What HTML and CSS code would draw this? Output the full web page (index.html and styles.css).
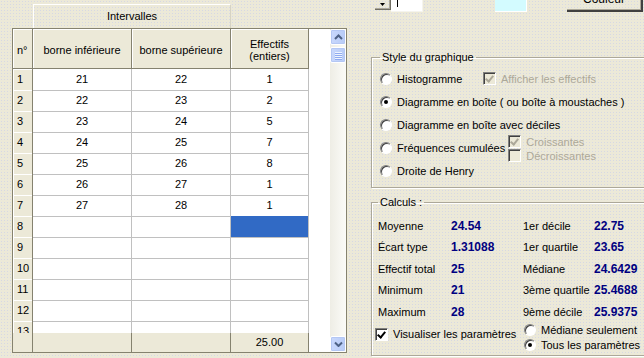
FILE: index.html
```html
<!DOCTYPE html>
<html lang="fr">
<head>
    <meta charset="UTF-8">
    <title>Statistiques - Intervalles</title>
    <link rel="stylesheet" href="styles.css">
</head>
<body>
<div class="app">

    <!-- grille de saisie -->
    <section class="data">
        <div class="band">Intervalles</div>
        <div class="grid">
            <div class="sheet">
                <div class="rows">
                    <div class="row head">
                        <span class="num">n°</span>
                        <span>borne inférieure</span>
                        <span>borne supérieure</span>
                        <span>Effectifs<br>(entiers)</span>
                    </div>
                    <div class="row"><span class="num">1</span><span>21</span><span>22</span><span>1</span></div>
                    <div class="row"><span class="num">2</span><span>22</span><span>23</span><span>2</span></div>
                    <div class="row"><span class="num">3</span><span>23</span><span>24</span><span>5</span></div>
                    <div class="row"><span class="num">4</span><span>24</span><span>25</span><span>7</span></div>
                    <div class="row"><span class="num">5</span><span>25</span><span>26</span><span>8</span></div>
                    <div class="row"><span class="num">6</span><span>26</span><span>27</span><span>1</span></div>
                    <div class="row"><span class="num">7</span><span>27</span><span>28</span><span>1</span></div>
                    <div class="row"><span class="num">8</span><span></span><span></span><span class="selected"></span></div>
                    <div class="row"><span class="num">9</span><span></span><span></span><span></span></div>
                    <div class="row"><span class="num">10</span><span></span><span></span><span></span></div>
                    <div class="row"><span class="num">11</span><span></span><span></span><span></span></div>
                    <div class="row"><span class="num">12</span><span></span><span></span><span></span></div>
                    <div class="row"><span class="num">13</span><span></span><span></span><span></span></div>
                </div>
                <div class="row foot">
                    <span></span><span></span><span></span><span>25.00</span>
                </div>
            </div>
            <div class="vscroll">
                <div class="sbtn">
                    <svg width="9" height="6" viewBox="0 0 9 6"><path d="M1 5 L4.5 1.5 L8 5" stroke="#4d6185" stroke-width="2" fill="none"/></svg>
                </div>
                <div class="thumb"><i></i><i></i><i></i><i></i></div>
                <div class="track"></div>
                <div class="sbtn">
                    <svg width="9" height="6" viewBox="0 0 9 6"><path d="M1 1.5 L4.5 5 L8 1.5" stroke="#4d6185" stroke-width="2" fill="none"/></svg>
                </div>
            </div>
        </div>
    </section>

    <!-- options -->
    <section class="side">
        <div class="toolbar">
            <div class="spin">
                <svg width="5" height="3" viewBox="0 0 5 3"><path d="M0 0 H5 L2.5 3 Z" fill="#000"/></svg>
            </div>
            <div class="field"><i class="caret"></i></div>
            <div class="swatch"></div>
            <div class="btn"><span>Couleur</span></div>
        </div>

        <fieldset class="group style">
            <legend>Style du graphique</legend>
            <div class="opt">
                <label class="radio w-hist"><i class="dot"></i>Histogramme</label>
                <label class="check off"><i class="box on"></i>Afficher les effectifs</label>
            </div>
            <div class="opt">
                <label class="radio"><i class="dot on"></i>Diagramme en boîte ( ou boîte à moustaches )</label>
            </div>
            <div class="opt">
                <label class="radio"><i class="dot"></i>Diagramme en boîte avec déciles</label>
            </div>
            <div class="opt">
                <label class="radio"><i class="dot"></i>Fréquences cumulées</label>
                <div class="sub">
                    <label class="check off"><i class="box on"></i>Croissantes</label>
                    <label class="check off"><i class="box"></i>Décroissantes</label>
                </div>
            </div>
            <div class="opt">
                <label class="radio"><i class="dot"></i>Droite de Henry</label>
            </div>
        </fieldset>

        <fieldset class="group calc">
            <legend>Calculs :</legend>
            <div class="stats">
                <span>Moyenne</span><b>24.54</b><span>1er décile</span><b>22.75</b>
                <span>Écart type</span><b>1.31088</b><span>1er quartile</span><b>23.65</b>
                <span>Effectif total</span><b>25</b><span>Médiane</span><b>24.6429</b>
                <span>Minimum</span><b>21</b><span>3ème quartile</span><b>25.4688</b>
                <span>Maximum</span><b>28</b><span>9ème décile</span><b>25.9375</b>
            </div>
            <div class="bottom">
                <label class="check show"><i class="box on"></i>Visualiser les paramètres</label>
                <div class="which">
                    <label class="radio"><i class="dot"></i>Médiane seulement</label>
                    <label class="radio"><i class="dot on"></i>Tous les paramètres</label>
                </div>
            </div>
        </fieldset>
    </section>

</div>
</body>
</html>
```

FILE: styles.css
```css
* {
    box-sizing: border-box;
}

body {
    margin: 0;
    width: 644px;
    height: 358px;
    overflow: hidden;
    font-family: "Liberation Sans", Arial, sans-serif;
    font-size: 11px;
    color: #000;
    background-color: #ece9d8;
    background-image: radial-gradient(circle, #d6d8e4 0.6px, transparent 0.9px);
    background-size: 3px 3px;
}

.app {
    display: flex;
    height: 358px;
}

/* ---------- grille ---------- */

.data {
    width: 371px;
    flex: none;
    padding: 4px 0 0 12px;
}

.band {
    margin-left: 21px;
    width: 198px;
    height: 24px;
    line-height: 23px;
    text-align: center;
    border-top: 1px solid #fff;
    border-left: 1px solid #fff;
    border-right: 1px solid #d6d3c4;
}

.grid {
    display: flex;
    width: 335px;
    height: 325px;
    border: 1px solid #85826f;
}

.sheet {
    width: 317px;
    display: flex;
    flex-direction: column;
    background: #fff;
}

.rows {
    height: 304px;
    overflow: hidden;
}

.row {
    display: grid;
    grid-template-columns: 20px 99px 99px 78px;
    height: 21px;
}

.row > span {
    border-right: 1px solid #c0c0c0;
    border-bottom: 1px solid #c0c0c0;
    text-align: center;
    line-height: 21px;
}

.row > .num {
    text-align: left;
    padding-left: 4px;
    background: #ece9d8;
    border-right-color: #85826f;
    border-bottom-color: #85826f;
    box-shadow: inset 1px 1px #fff;
}

.row > .selected {
    background: #316ac5;
}

.row.head {
    height: 40px;
}

.row.head > span {
    background: #ece9d8;
    border-right-color: #85826f;
    border-bottom-color: #85826f;
    box-shadow: inset 1px 1px #fff;
    display: flex;
    align-items: center;
    justify-content: center;
    line-height: 12px;
    padding-top: 2px;
}

.row.head > .num {
    justify-content: flex-start;
}

.row.foot {
    height: 19px;
    flex: none;
    margin-top: auto;
}

.row.foot > span {
    background: #ece9d8;
    border-bottom: none;
    border-right-color: #85826f;
    line-height: 19px;
}

/* barre de défilement */

.vscroll {
    width: 16px;
    display: flex;
    flex-direction: column;
    background: linear-gradient(to right, #eeede5, #fbfbf8);
}

.sbtn,
.thumb {
    height: 16px;
    display: flex;
    align-items: center;
    justify-content: center;
    border: 1px solid #fff;
    border-radius: 2px;
    background: linear-gradient(to right, #c9d8fc, #b7cbf7);
    box-shadow: inset 0 0 0 1px #b4c7f4;
}

.thumb {
    margin-top: 2px;
    height: 16px;
    flex-direction: column;
    gap: 1px;
}

.thumb i {
    width: 7px;
    height: 1px;
    background: #eef4fe;
    box-shadow: 0 1px #8faaf0;
}

.track {
    flex: 1;
}

/* ---------- options ---------- */

.side {
    flex: 1;
    display: flex;
    flex-direction: column;
}

.toolbar {
    display: flex;
    align-items: flex-start;
    height: 12px;
    padding-left: 4px;
}

.spin {
    width: 16px;
    height: 10px;
    display: flex;
    align-items: center;
    justify-content: center;
    border-right: 1px solid #716f64;
    border-bottom: 1px solid #716f64;
    box-shadow: inset -1px -1px #aca899;
}

.field {
    width: 32px;
    height: 12px;
    background: #fff;
    border-right: 1px solid #f5f4ee;
    border-bottom: 1px solid #f5f4ee;
    padding-left: 6px;
}

.caret {
    display: block;
    width: 1px;
    height: 7px;
    background: #000;
}

.swatch {
    margin-left: 72px;
    width: 32px;
    height: 12px;
    background: #d3fbff;
    border-right: 1px solid #fff;
    border-bottom: 1px solid #fff;
}

.btn {
    margin-left: 40px;
    width: 76px;
    height: 12px;
    overflow: hidden;
    text-align: center;
    border-right: 2px solid #404040;
    border-bottom: 2px solid #404040;
    box-shadow: inset -1px -1px #aca899;
}

.btn span {
    display: block;
    margin-top: -7px;
    font-size: 12px;
    line-height: 13px;
}

.group {
    margin: 0;
    border: 1px solid #aca899;
    box-shadow: 1px 1px 0 #fff, inset 1px 1px 0 #fff;
    margin-right: -6px;
}

.group legend {
    padding: 0 2px;
    line-height: 13px;
}

.style {
    margin-top: 39px;
    padding: 3px 0 5px 8px;
}

.opt {
    display: flex;
    align-items: center;
    height: 23px;
}

.radio,
.check {
    display: flex;
    align-items: center;
    white-space: nowrap;
}

.w-hist {
    width: 103px;
}

.dot {
    width: 12px;
    height: 12px;
    margin-right: 5px;
    flex: none;
    border-radius: 50%;
    background: #fff;
    border: 1px solid;
    border-color: #808080 #fff #fff #808080;
    box-shadow: inset 1px 1px #404040;
    display: flex;
    align-items: center;
    justify-content: center;
}

.dot.on::after {
    content: "";
    width: 4px;
    height: 4px;
    border-radius: 50%;
    background: #000;
}

.box {
    width: 13px;
    height: 13px;
    margin-right: 5px;
    flex: none;
    background: #fff;
    border: 1px solid;
    border-color: #808080 #fff #fff #808080;
    box-shadow: inset 1px 1px #404040;
    position: relative;
}

.box.on::after {
    content: "";
    position: absolute;
    left: 3px;
    top: 1px;
    width: 3px;
    height: 6px;
    border: solid #000;
    border-width: 0 2px 2px 0;
    transform: rotate(40deg);
}

.check.off {
    color: #aca899;
}

.check.off .box {
    background: #ece9d8;
}

.check.off .box.on::after {
    border-color: #aca899;
}

.sub {
    display: flex;
    flex-direction: column;
    margin-left: 3px;
    margin-top: 2px;
    gap: 1px;
}

.sub .check {
    height: 13px;
}

.calc {
    margin-top: 8px;
    padding: 6px 0 0 6px;
    flex: 1;
    margin-bottom: 2px;
}

.stats {
    display: grid;
    grid-template-columns: 73px 72px 71px auto;
    grid-auto-rows: 21.5px;
    align-items: center;
}

.stats b {
    color: #000080;
    font-size: 12px;
}

.bottom {
    display: flex;
}

.check.show {
    width: 149px;
    margin-left: -3px;
    margin-top: 5px;
    align-self: flex-start;
}

.which .radio {
    height: 15px;
}
```
